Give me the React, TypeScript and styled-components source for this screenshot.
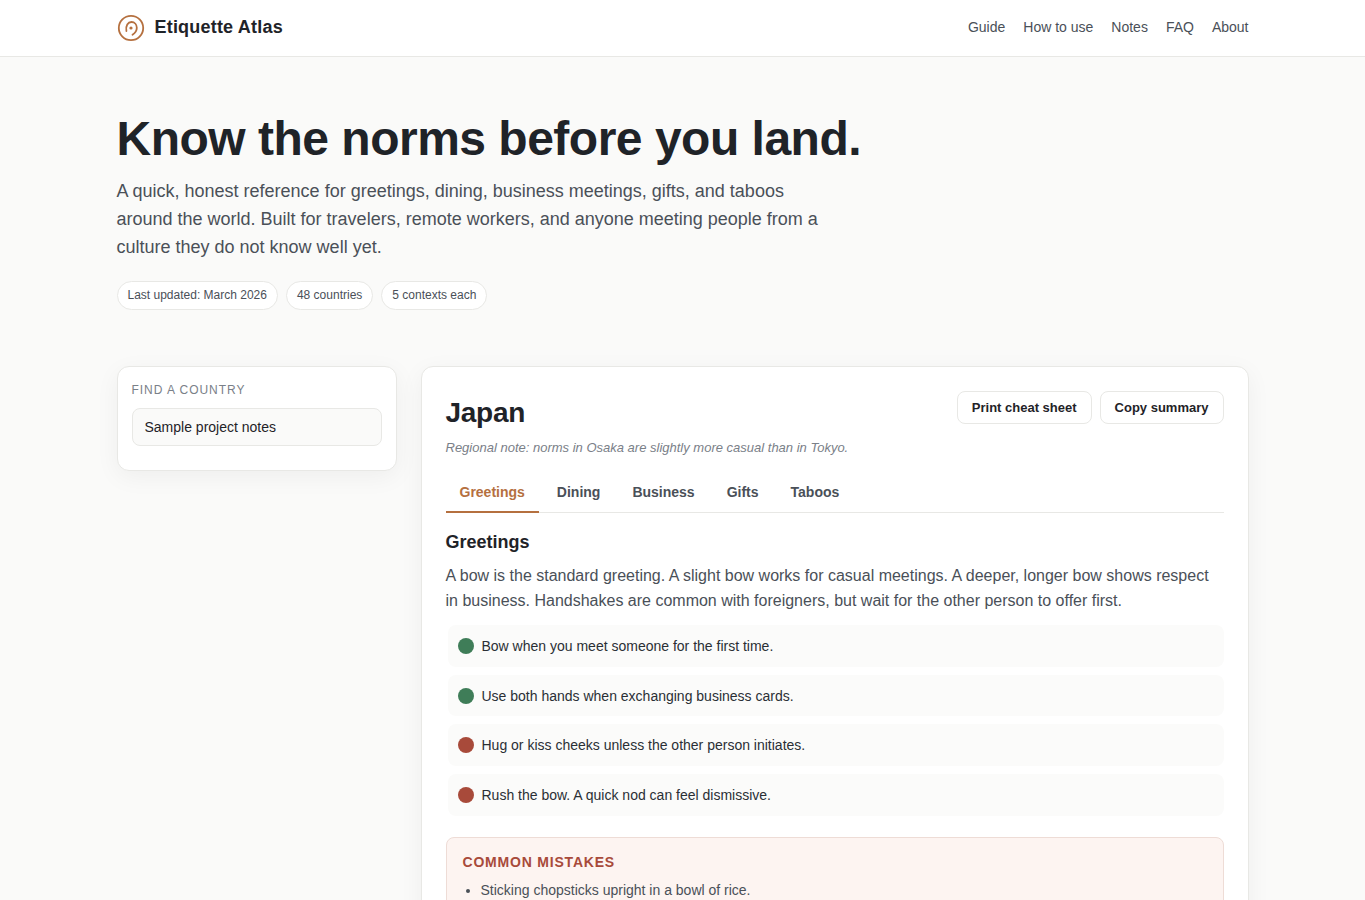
import React from "react";
import styled, { createGlobalStyle } from "styled-components";

const Global = createGlobalStyle`
  * { box-sizing: border-box; }
  html, body { margin: 0; padding: 0; }
  body {
    background: #fafaf9;
    color: #1f2328;
    font-family: "Liberation Sans", Arial, sans-serif;
  }
`;

const Header = styled.header`
  height: 57px;
  background: #fff;
  border-bottom: 1px solid #e8e8e5;
`;
const Wrap = styled.div`
  max-width: 1180px;
  margin: 0 auto;
  padding: 0 24px;
`;
const HeaderRow = styled(Wrap)`
  height: 54px;
  display: flex;
  align-items: center;
  justify-content: space-between;
`;
const Brand = styled.div`
  display: flex;
  align-items: center;
  gap: 10px;
  font-size: 18px;
  font-weight: 700;
  letter-spacing: 0.2px;
  color: #1f2328;
`;
const LogoMark = styled.svg`
  flex: none;
  margin-top: 2px;
`;
const Nav = styled.nav`
  display: flex;
  gap: 18px;
  font-size: 14px;
  color: #4a5058;
`;
const Hero = styled.section`
  padding: 56px 0 56px;
`;
const Title = styled.h1`
  margin: 0 0 12px;
  font-size: 48px;
  line-height: 52px;
  font-weight: 700;
  letter-spacing: -0.5px;
  color: #1f2328;
`;
const Lead = styled.p`
  margin: 0 0 20px;
  max-width: 720px;
  font-size: 18px;
  line-height: 28px;
  color: #4a5058;
`;
const Chips = styled.div`
  display: flex;
  gap: 8px;
`;
const Chip = styled.span`
  height: 29px;
  display: inline-flex;
  align-items: center;
  padding: 0 10px 1px;
  background: #fff;
  border: 1px solid #e8e8e5;
  border-radius: 999px;
  font-size: 12px;
  color: #4a5058;
`;
const Layout = styled.div`
  display: grid;
  grid-template-columns: 280px 1fr;
  gap: 24px;
  align-items: start;
  padding-bottom: 48px;
`;
const Side = styled.aside`
  height: 105px;
  padding: 16px 14px;
  background: #fff;
  border: 1px solid #e8e8e5;
  border-radius: 12px;
  box-shadow: 0 6px 24px rgba(0, 0, 0, 0.05);
`;
const SideLabel = styled.div`
  font-size: 12px;
  line-height: 14px;
  letter-spacing: 0.96px;
  color: #7a8088;
  margin-bottom: 11px;
`;
const SearchField = styled.input`
  display: block;
  width: 100%;
  height: 38px;
  padding: 0 12px;
  background: #fafaf9;
  border: 1px solid #e8e8e5;
  border-radius: 8px;
  font: 14px "Liberation Sans", Arial, sans-serif;
  color: #1f2328;
  outline: none;
`;
const Card = styled.main`
  padding: 24px;
  background: #fff;
  border: 1px solid #e8e8e5;
  border-radius: 12px;
  box-shadow: 0 6px 24px rgba(0, 0, 0, 0.05);
`;
const CardTop = styled.div`
  display: flex;
  align-items: flex-start;
  justify-content: space-between;
`;
const CountryName = styled.h2`
  margin: 6px 0 0;
  font-size: 28px;
  line-height: 32px;
  font-weight: 700;
  letter-spacing: -0.28px;
  color: #1f2328;
`;
const Actions = styled.div`
  display: flex;
  gap: 8px;
`;
const ActionButton = styled.button`
  height: 33px;
  padding: 0 14px;
  background: #fff;
  border: 1px solid #e8e8e5;
  border-radius: 8px;
  font: 700 13px "Liberation Sans", Arial, sans-serif;
  color: #1f2328;
`;
const Regional = styled.p`
  margin: 9px 0 0;
  font-size: 13px;
  line-height: 20px;
  font-style: italic;
  color: #7a8088;
`;
const Tabs = styled.div`
  display: flex;
  gap: 4px;
  margin-top: 15px;
  border-bottom: 1px solid #e8e8e5;
`;
const Tab = styled.div<{ $active?: boolean }>`
  height: 39.5px;
  margin-bottom: -1px;
  padding: 1px 14px 0;
  display: flex;
  align-items: center;
  font-size: 14px;
  font-weight: 700;
  color: ${(p) => (p.$active ? "#b5703f" : "#4a5058")};
  border-bottom: 2px solid ${(p) => (p.$active ? "#b5703f" : "transparent")};
`;
const SectionTitle = styled.h3`
  margin: 18px 0 0;
  font-size: 18px;
  line-height: 22px;
  font-weight: 700;
  color: #1f2328;
`;
const Body = styled.p`
  margin: 10px 0 0;
  font-size: 16px;
  line-height: 25.6px;
  color: #4a5058;
`;
const Rules = styled.ul`
  list-style: none;
  margin: 11.5px 0 0;
  padding: 0;
  display: flex;
  flex-direction: column;
  gap: 8px;
`;
const Rule = styled.li`
  height: 41.6px;
  display: flex;
  align-items: center;
  gap: 8px;
  margin-left: 2px;
  padding: 0 10px;
  background: #fbfbfa;
  border-radius: 8px;
  font-size: 14px;
  color: #2a2f35;
`;
const Dot = styled.span<{ $tone: "do" | "dont" }>`
  flex: none;
  width: 16px;
  height: 16px;
  border-radius: 50%;
  background: ${(p) => (p.$tone === "do" ? "#3f7d58" : "#a84a3a")};
`;
const Mistakes = styled.section`
  margin-top: 21px;
  padding: 16px;
  background: #fdf4f1;
  border: 1px solid #eedcd6;
  border-radius: 8px;
`;
const MistakesTitle = styled.h4`
  margin: 0;
  font-size: 14px;
  line-height: 17px;
  font-weight: 700;
  letter-spacing: 0.8px;
  color: #a84a3a;
`;
const MistakeList = styled.ul`
  margin: 8px 0 0;
  padding-left: 18px;
  font-size: 14px;
  line-height: 22px;
  color: #4a5058;
`;

const Logo = () => (
  <LogoMark width="28" height="28" viewBox="0 0 28 28" fill="none" stroke="#b5703f" strokeWidth="1.8" strokeLinecap="round">
    <circle cx="14" cy="14" r="12.2" />
    <path d="M9.4 17C8.4 11.5 11 8 14.5 8c3.2 0 5.3 2.7 5.3 5.7 0 3-1.6 5.2-4.3 7" />
    <circle cx="14" cy="14" r="1.6" fill="#b5703f" stroke="none" />
  </LogoMark>
);

const rules: { tone: "do" | "dont"; text: string }[] = [
  { tone: "do", text: "Bow when you meet someone for the first time." },
  { tone: "do", text: "Use both hands when exchanging business cards." },
  { tone: "dont", text: "Hug or kiss cheeks unless the other person initiates." },
  { tone: "dont", text: "Rush the bow. A quick nod can feel dismissive." },
];

export default function App() {
  return (
    <>
      <Global />
      <Header>
        <HeaderRow>
          <Brand>
            <Logo />
            Etiquette Atlas
          </Brand>
          <Nav>
            <span>Guide</span>
            <span>How to use</span>
            <span>Notes</span>
            <span>FAQ</span>
            <span>About</span>
          </Nav>
        </HeaderRow>
      </Header>
      <Wrap>
        <Hero>
          <Title>Know the norms before you land.</Title>
          <Lead>
            A quick, honest reference for greetings, dining, business meetings, gifts, and taboos around the world.
            Built for travelers, remote workers, and anyone meeting people from a culture they do not know well yet.
          </Lead>
          <Chips>
            <Chip>Last updated: March 2026</Chip>
            <Chip>48 countries</Chip>
            <Chip>5 contexts each</Chip>
          </Chips>
        </Hero>
        <Layout>
          <Side>
            <SideLabel>FIND A COUNTRY</SideLabel>
            <SearchField defaultValue="Sample project notes" />
          </Side>
          <Card>
            <CardTop>
              <CountryName>Japan</CountryName>
              <Actions>
                <ActionButton>Print cheat sheet</ActionButton>
                <ActionButton>Copy summary</ActionButton>
              </Actions>
            </CardTop>
            <Regional>Regional note: norms in Osaka are slightly more casual than in Tokyo.</Regional>
            <Tabs>
              <Tab $active>Greetings</Tab>
              <Tab>Dining</Tab>
              <Tab>Business</Tab>
              <Tab>Gifts</Tab>
              <Tab>Taboos</Tab>
            </Tabs>
            <SectionTitle>Greetings</SectionTitle>
            <Body>
              A bow is the standard greeting. A slight bow works for casual meetings. A deeper, longer bow shows respect
              in business. Handshakes are common with foreigners, but wait for the other person to offer first.
            </Body>
            <Rules>
              {rules.map((r) => (
                <Rule key={r.text}>
                  <Dot $tone={r.tone} />
                  {r.text}
                </Rule>
              ))}
            </Rules>
            <Mistakes>
              <MistakesTitle>COMMON MISTAKES</MistakesTitle>
              <MistakeList>
                <li>Sticking chopsticks upright in a bowl of rice.</li>
                <li>Tipping at restaurants.</li>
              </MistakeList>
            </Mistakes>
          </Card>
        </Layout>
      </Wrap>
    </>
  );
}
